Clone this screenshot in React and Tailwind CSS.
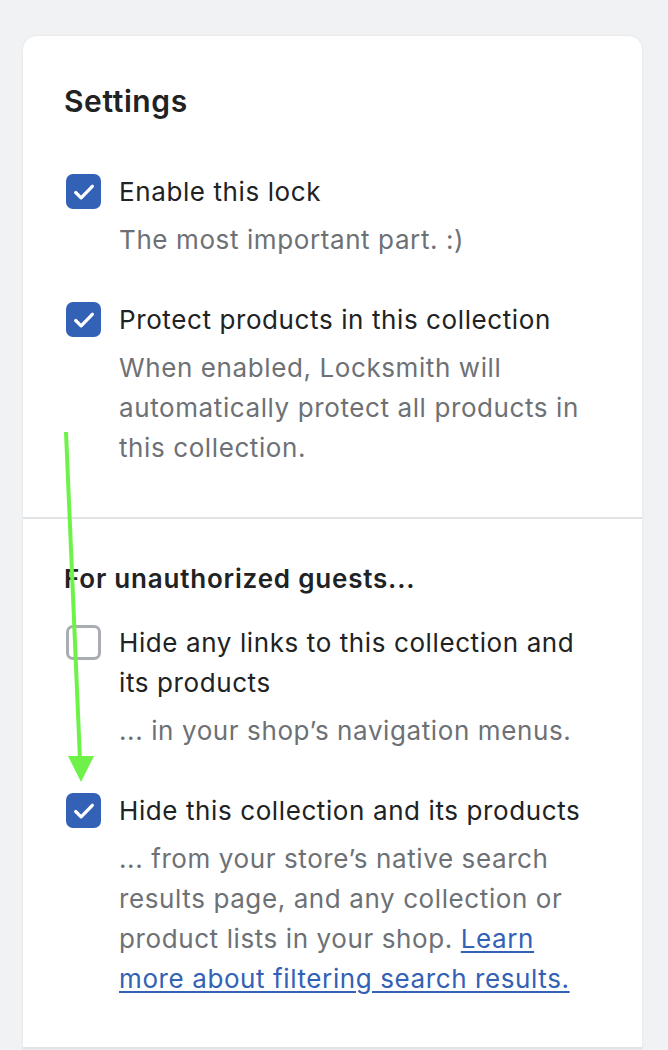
import React from "react";

function CheckMark() {
  return (
    <svg viewBox="0 0 20 20" className="w-[26px] h-[26px]" fill="none">
      <path
        d="M3.6 10.4l4.2 4.1 8.6-8.9"
        stroke="white"
        strokeWidth="2.5"
        strokeLinecap="round"
        strokeLinejoin="round"
      />
    </svg>
  );
}

function Box({ checked }) {
  if (checked) {
    return (
      <div className="w-[35px] h-[35px] mt-[2px] ml-[2px] flex-shrink-0 rounded-[7px] bg-[#3261b6] flex items-center justify-center">
        <CheckMark />
      </div>
    );
  }
  return (
    <div className="w-[35px] h-[35px] mt-[2px] ml-[2px] flex-shrink-0 rounded-[7px] border-[3px] border-[#a9adb3] bg-white" />
  );
}

function Option({ checked, title, children }) {
  return (
    <div className="flex gap-[18px]">
      <Box checked={checked} />
      <div className="flex-1 min-w-0">
        <div className="text-[26px] leading-[40px] tracking-[0.6px] text-[#202223]">{title}</div>
        <div className="mt-[8px] text-[26px] leading-[40px] tracking-[0.6px] text-[#6d7175]">
          {children}
        </div>
      </div>
    </div>
  );
}

export default function App() {
  return (
    <div
      className="relative min-h-[1050px] bg-[#f1f2f4] pt-[36px] overflow-hidden"
      style={{ fontFamily: "Inter, 'Noto Sans', sans-serif" }}
    >
      <div className="ml-[23px] w-[619px] bg-white rounded-t-[14px] shadow-[0_0_3px_rgba(0,0,0,0.08)]">
        <div className="pl-[41px] pr-[38px] pt-[45px] pb-[49px] border-b-2 border-[#e1e3e5]">
          <h2 className="text-[30px] leading-[40px] tracking-[0.6px] font-semibold text-[#202223] mb-[51px]">
            Settings
          </h2>
          <div className="flex flex-col gap-[40px]">
            <Option checked title="Enable this lock">
              The most important part. :)
            </Option>
            <Option checked title="Protect products in this collection">
              When enabled, Locksmith will automatically protect all products in this collection.
            </Option>
          </div>
        </div>
        <div className="pl-[41px] pr-[38px] pt-[40px] pb-[48px] border-b-2 border-[#e1e3e5]">
          <h3 className="text-[26px] leading-[40px] tracking-[0.8px] font-semibold text-[#202223] mb-[24px]">
            For unauthorized guests...
          </h3>
          <div className="flex flex-col gap-[40px]">
            <Option checked={false} title="Hide any links to this collection and its products">
              ... in your shop’s navigation menus.
            </Option>
            <Option checked title="Hide this collection and its products">
              ... from your store’s native search results page, and any collection or product lists in your shop.{" "}
              <a href="#" className="text-[#3261b6] underline underline-offset-[3px]">
                Learn more about filtering search results.
              </a>
            </Option>
          </div>
        </div>
      </div>

      <svg
        className="absolute left-0 top-0 pointer-events-none"
        width="668"
        height="1050"
        viewBox="0 0 668 1050"
      >
        <line x1="66" y1="432" x2="80" y2="760" stroke="#6ef24a" strokeWidth="4" />
        <polygon points="68,756 94,756 81,782" fill="#6ef24a" />
      </svg>
    </div>
  );
}
